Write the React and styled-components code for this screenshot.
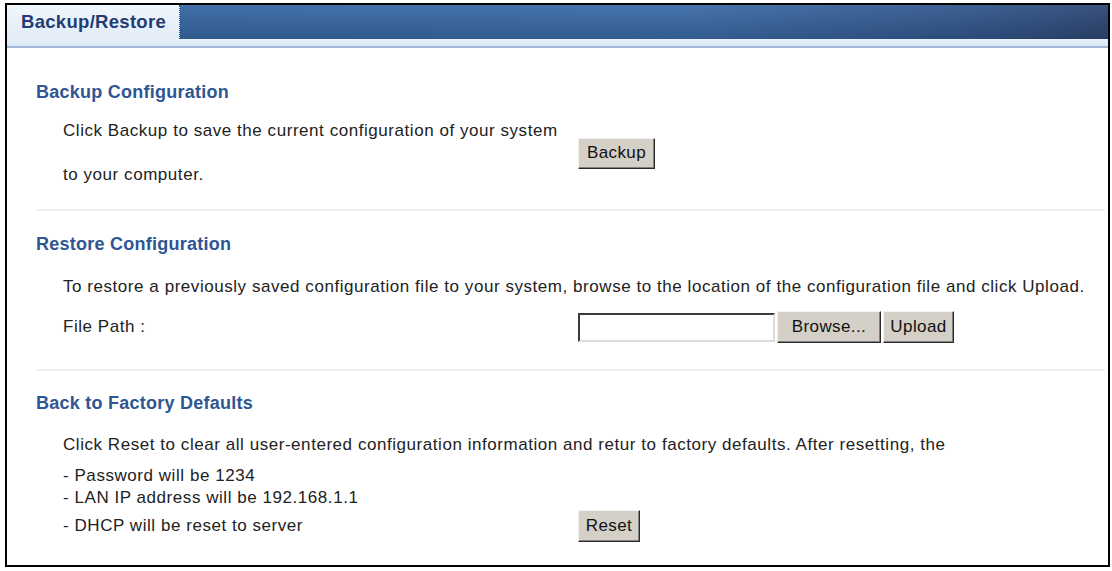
import React from 'react';
import styled, { createGlobalStyle } from 'styled-components';

const GlobalStyle = createGlobalStyle`
  html, body {
    margin: 0;
    padding: 0;
    background: #fff;
  }
`;

const App = () => {
  return (
    <>
      <GlobalStyle />
      <Frame>
        <TabBar>
          <Tab>Backup/Restore</Tab>
          <TabFill />
        </TabBar>
        <Strip />

        <Header $top={32}>Backup Configuration</Header>
        <Rows $gap={5} $rows="44px 44px">
          <Text>Click Backup to save the current configuration of your system</Text>
          <Controls $span={2}>
            <Button $w={77} $h={31}>Backup</Button>
          </Controls>
          <Text>to your computer.</Text>
        </Rows>
        <Divider $top={12} />

        <Header $top={21}>Restore Configuration</Header>
        <Rows $gap={11} $rows="40px 40px">
          <Text $wide>
            To restore a previously saved configuration file to your system, browse to the location of the configuration file and click Upload.
          </Text>
          <Text>File Path :</Text>
          <Controls>
            <FileInput type="text" />
            <Button $w={104}>Browse...</Button>
            <Button $w={71}>Upload</Button>
          </Controls>
        </Rows>
        <Divider $top={22} />

        <Header $top={20}>Back to Factory Defaults</Header>
        <Rows $gap={10} $rows="40px 44px 34px">
          <Text $wide>
            Click Reset to clear all user-entered configuration information and retur to factory defaults. After resetting, the
          </Text>
          <Lines>
            <div>- Password will be 1234</div>
            <div>- LAN IP address will be 192.168.1.1</div>
          </Lines>
          <div />
          <Text>- DHCP will be reset to server</Text>
          <Controls>
            <Button $w={62}>Reset</Button>
          </Controls>
        </Rows>
      </Frame>
    </>
  );
};

const Frame = styled.div`
  box-sizing: border-box;
  margin: 3px 0 0 5px;
  width: 1105px;
  height: 564px;
  border: 2px solid #000;
  overflow: hidden;
  background: #fff;
  font-family: "Liberation Sans", Arial, sans-serif;
`;

const TabBar = styled.div`
  display: flex;
  height: 34px;
`;

const Tab = styled.div`
  box-sizing: border-box;
  width: 173px;
  padding-left: 14px;
  display: flex;
  align-items: center;
  background: linear-gradient(#f1f6fd, #e2ebf7);
  border-right: 1px dotted #4a4a4a;
  color: #1f3d72;
  font-size: 18.5px;
  font-weight: bold;
  letter-spacing: 0.3px;
`;

const TabFill = styled.div`
  flex: 1;
  background:
    linear-gradient(rgba(255, 255, 255, 0.06), rgba(0, 0, 0, 0.14)),
    linear-gradient(to right, #3767a3, #3b6ba7 55%, #32578c 85%, #2d4774);
`;

const Strip = styled.div`
  height: 7px;
  background: linear-gradient(#e8f0fa, #dce7f6);
  border-bottom: 2px solid #a3b6d4;
`;

const Header = styled.div`
  margin: ${props => props.$top}px 0 0 29px;
  line-height: 24px;
  font-size: 18px;
  font-weight: bold;
  letter-spacing: 0.25px;
  color: #2e5594;
`;

const Rows = styled.div`
  display: grid;
  grid-template-columns: 515px 1fr;
  grid-template-rows: ${props => props.$rows};
  align-items: center;
  margin-top: ${props => props.$gap}px;
  padding-left: 56px;
`;

const Text = styled.div`
  font-size: 17px;
  letter-spacing: 0.55px;
  color: #222;
  white-space: nowrap;
  grid-column: ${props => (props.$wide ? '1 / -1' : 'auto')};
`;

const Lines = styled.div`
  font-size: 17px;
  letter-spacing: 0.55px;
  line-height: 22px;
  color: #222;
  white-space: nowrap;
`;

const Controls = styled.div`
  display: flex;
  align-items: center;
  gap: 2px;
  grid-column: 2;
  grid-row: ${props => (props.$span ? `1 / span ${props.$span}` : 'auto')};
`;

const Button = styled.button`
  box-sizing: border-box;
  width: ${props => props.$w}px;
  height: ${props => props.$h || 32}px;
  padding: 0;
  font-family: "Liberation Sans", Arial, sans-serif;
  font-size: 17px;
  letter-spacing: 0.4px;
  color: #111;
  background: #d4d0c8;
  border: 1px solid;
  border-color: #f4f3f0 #2a2a2a #2a2a2a #f4f3f0;
  box-shadow: inset -1px -1px 0 #808080;
`;

const FileInput = styled.input`
  box-sizing: border-box;
  width: 197px;
  height: 29px;
  border: 2px solid;
  border-color: #3a3a3a #dcdcdc #dcdcdc #3a3a3a;
  background: #fff;
`;

const Divider = styled.div`
  height: 2px;
  margin: ${props => props.$top}px 3px 0 29px;
  background: #efefef;
`;

export default App;
